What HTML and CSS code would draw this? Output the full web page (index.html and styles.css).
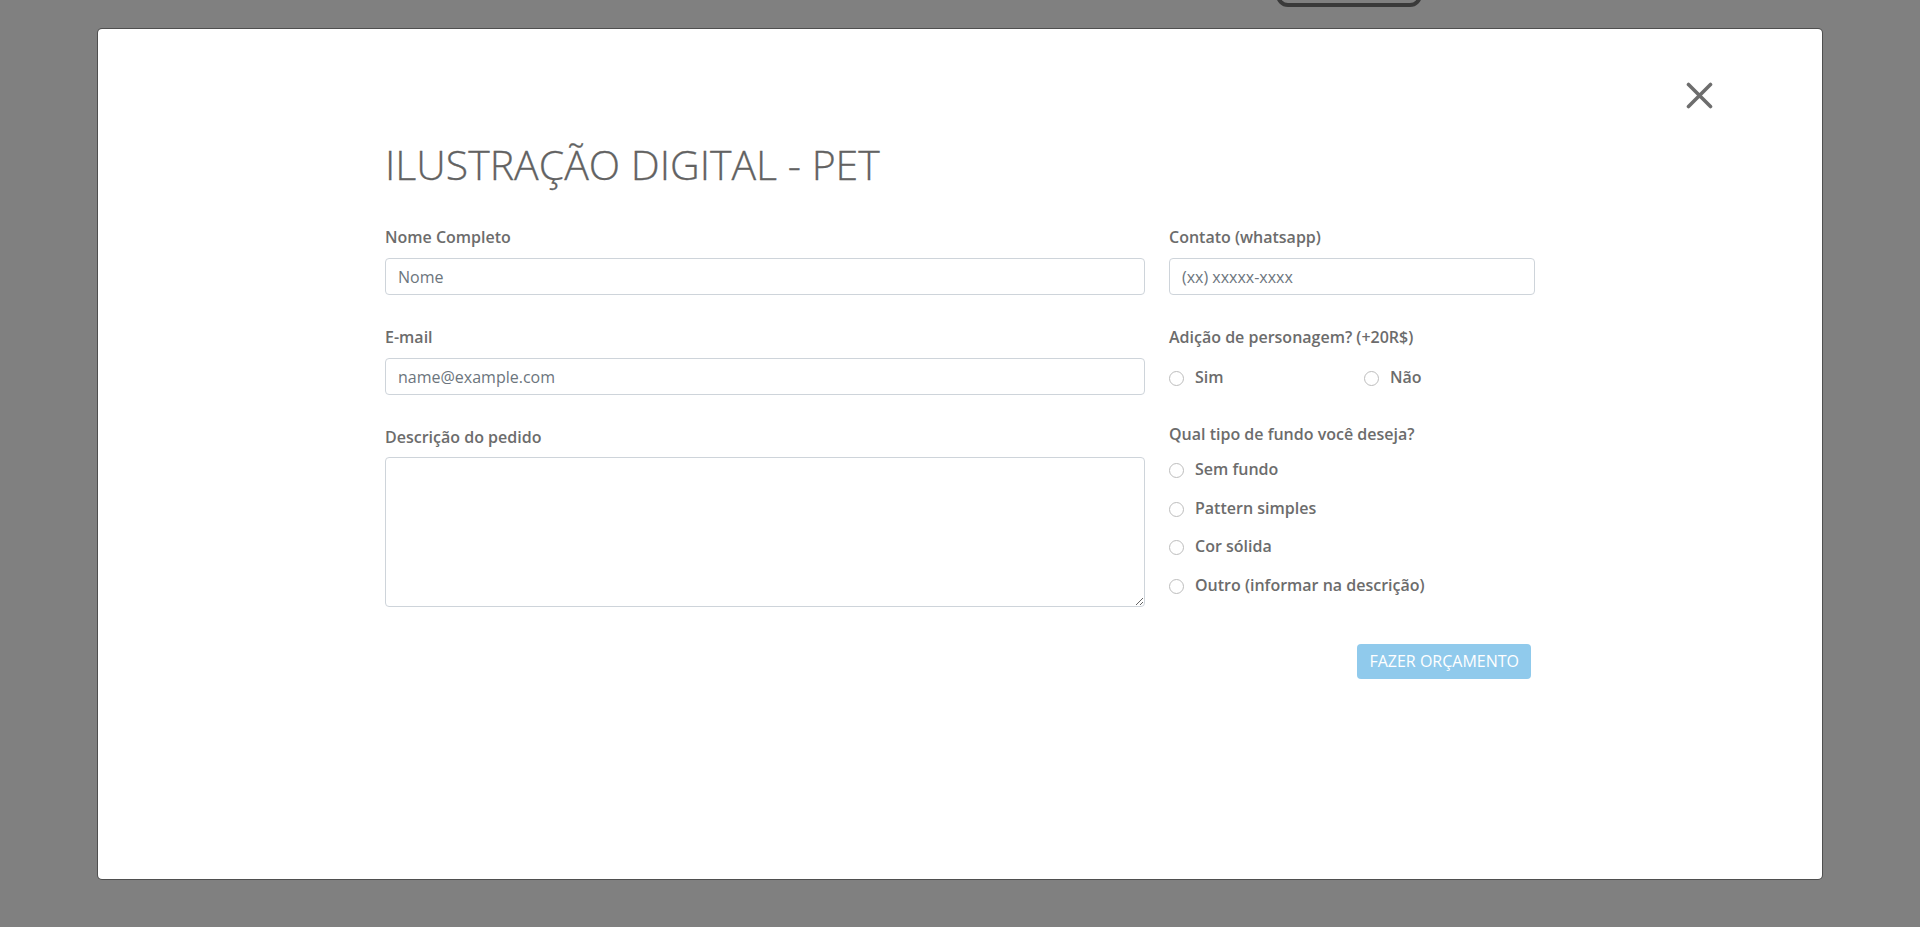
FILE: index.html
```html
<!DOCTYPE html>
<html lang="pt-BR">
<head>
<meta charset="utf-8">
<title>Ilustração Digital - Pet</title>
<link rel="stylesheet" href="styles.css">
</head>
<body>
<div class="backdrop-btn"></div>
<div class="modal">
  <button class="close" aria-label="Fechar">
    <svg width="27" height="27" viewBox="0 0 27 27"><path d="M2.5 2.5 L24.5 24.5 M24.5 2.5 L2.5 24.5" stroke="#6d6d6d" stroke-width="3.6" stroke-linecap="round" fill="none"/></svg>
  </button>
  <div class="container">
    <h1 class="title">ILUSTRAÇÃO DIGITAL - PET</h1>
    <form class="form-grid">
      <div class="col-left">
        <div class="group">
          <label class="form-label">Nome Completo</label>
          <input class="form-control" type="text" placeholder="Nome">
        </div>
        <div class="group">
          <label class="form-label">E-mail</label>
          <input class="form-control" type="email" placeholder="name@example.com">
        </div>
        <div class="group group-desc">
          <label class="form-label">Descrição do pedido</label>
          <textarea class="form-control textarea"></textarea>
        </div>
      </div>
      <div class="col-right">
        <div class="group">
          <label class="form-label">Contato (whatsapp)</label>
          <input class="form-control" type="text" placeholder="(xx) xxxxx-xxxx">
        </div>
        <div class="group group-radio">
          <label class="form-label">Adição de personagem? (+20R$)</label>
          <div class="radio-row">
            <label class="check"><input type="radio" name="pers"><span>Sim</span></label>
            <label class="check"><input type="radio" name="pers"><span>Não</span></label>
          </div>
        </div>
        <div class="group">
          <label class="form-label">Qual tipo de fundo você deseja?</label>
          <div class="radio-list">
            <label class="check"><input type="radio" name="fundo"><span>Sem fundo</span></label>
            <label class="check"><input type="radio" name="fundo"><span>Pattern simples</span></label>
            <label class="check"><input type="radio" name="fundo"><span>Cor sólida</span></label>
            <label class="check"><input type="radio" name="fundo"><span>Outro (informar na descrição)</span></label>
          </div>
        </div>
        <div class="actions">
          <button type="button" class="btn-submit">FAZER ORÇAMENTO</button>
        </div>
      </div>
    </form>
  </div>
</div>
</body>
</html>
```
FILE: styles.css
```css
* { box-sizing: border-box; }
html, body {
  margin: 0;
  padding: 0;
  height: 927px;
  overflow: hidden;
}
body {
  background: #808080;
  font-family: "Open Sans", "Noto Sans", sans-serif;
  color: #6c6c6c;
  position: relative;
}
.backdrop-btn {
  position: absolute;
  left: 1276px;
  top: -40px;
  width: 146px;
  height: 47px;
  border: 4px solid #3a3a3a;
  border-radius: 12px;
}
.modal {
  position: relative;
  margin: 28px 97px 0;
  height: 852px;
  background: #fff;
  background-clip: padding-box;
  border: 1px solid rgba(0,0,0,0.38);
  border-radius: 5px;
  padding-top: 111px;
}
.close {
  position: absolute;
  top: 53px;
  right: 109px;
  width: 27px;
  height: 27px;
  padding: 0;
  border: 0;
  background: none;
  display: block;
}
.close svg { display: block; }
.container {
  width: 1150px;
  margin: 0 auto;
}
.title {
  margin: 0 0 36px;
  font-size: 41px;
  line-height: 49px;
  font-weight: 300;
  color: #626262;
  -webkit-text-stroke: 0.3px #626262;
}
.form-grid {
  display: grid;
  grid-template-columns: 760px 366px;
  column-gap: 24px;
}
.group { margin-bottom: 30px; }
.group-radio { margin-bottom: 33px; }
.form-label {
  display: block;
  font-size: 16px;
  line-height: 24px;
  font-weight: 600;
  color: #6c6c6c;
  margin-bottom: 9px;
}
.group-desc .form-label { margin-bottom: 8px; }
.form-control {
  display: block;
  width: 100%;
  height: 37px;
  padding: 6px 12px;
  font-family: inherit;
  font-size: 16px;
  line-height: 23px;
  color: #495057;
  background: #fff;
  border: 1px solid #ced4da;
  border-radius: 4px;
  outline: none;
}
.form-control::placeholder { color: #6c757d; opacity: 1; }
.textarea {
  height: 150px;
  resize: vertical;
}
.radio-row {
  display: grid;
  grid-template-columns: 1fr 1fr;
  column-gap: 24px;
  margin-top: 16px;
}
.radio-list {
  display: flex;
  flex-direction: column;
  row-gap: 14.7px;
  margin-top: 11px;
}
.check {
  display: flex;
  align-items: center;
  font-size: 16px;
  line-height: 24px;
  font-weight: 600;
  color: #6c6c6c;
}
.check input {
  appearance: none;
  -webkit-appearance: none;
  width: 15px;
  height: 15px;
  margin: 3px 11px 0 0;
  border: 1px solid #bdbdbd;
  border-radius: 50%;
  background: #fff;
  flex: none;
}
.actions {
  display: flex;
  justify-content: flex-end;
  padding-right: 4px;
  margin-top: 47px;
}
.btn-submit {
  font-family: inherit;
  font-size: 16px;
  line-height: 23px;
  font-weight: 400;
  color: #fff;
  background: #90caec;
  border: 0;
  border-radius: 4px;
  padding: 6px 12px;
  height: 35px;
}
```
